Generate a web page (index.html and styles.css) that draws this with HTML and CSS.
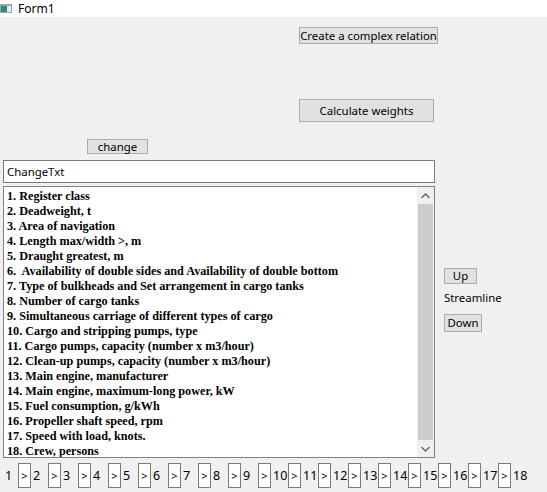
FILE: index.html
```html
<!DOCTYPE html>
<html>
<head>
<meta charset="utf-8">
<link rel="stylesheet" href="styles.css">
</head>
<body>
<div class="titlebar">
  <svg class="appicon" width="12" height="11" viewBox="0 0 12 11">
    <rect x="0" y="1" width="12" height="9" fill="#9aa7ae"/>
    <rect x="1" y="3" width="6" height="6" fill="#2e8c7a"/>
    <rect x="7" y="3" width="4" height="6" fill="#e6ecef"/>
  </svg>
  <span class="title">Form1</span>
</div>
<div class="client">
  <div class="row r1"><button class="btn b-complex">Create a complex relation</button></div>
  <div class="row r2"><button class="btn b-calc">Calculate weights</button></div>
  <div class="row r3"><button class="btn b-change">change</button></div>
  <div class="row r4"><div class="textbox">ChangeTxt</div></div>
  <div class="main">
    <div class="listbox">
      <div class="items">
        <div>1. Register class</div>
        <div>2. Deadweight, t</div>
        <div>3. Area of navigation</div>
        <div>4. Length max/width &gt;, m</div>
        <div>5. Draught greatest, m</div>
        <div>6.&nbsp; Availability of double sides and Availability of double bottom</div>
        <div>7. Type of bulkheads and Set arrangement in cargo tanks</div>
        <div>8. Number of cargo tanks</div>
        <div>9. Simultaneous carriage of different types of cargo</div>
        <div>10. Cargo and stripping pumps, type</div>
        <div>11. Cargo pumps, capacity (number x m3/hour)</div>
        <div>12. Clean-up pumps, capacity (number x m3/hour)</div>
        <div>13. Main engine, manufacturer</div>
        <div>14. Main engine, maximum-long power, kW</div>
        <div>15. Fuel consumption, g/kWh</div>
        <div>16. Propeller shaft speed, rpm</div>
        <div>17. Speed with load, knots.</div>
        <div>18. Crew, persons</div>
      </div>
      <div class="scrollbar">
        <div class="arrow"><svg width="9" height="6" viewBox="0 0 9 6"><path d="M0.5 5 L4.5 1 L8.5 5" fill="none" stroke="#606060" stroke-width="1.3"/></svg></div>
        <div class="thumb"></div>
        <div class="arrow"><svg width="9" height="6" viewBox="0 0 9 6"><path d="M0.5 1 L4.5 5 L8.5 1" fill="none" stroke="#606060" stroke-width="1.3"/></svg></div>
      </div>
    </div>
    <div class="side">
      <button class="btn b-up">Up</button>
      <div class="label">Streamline</div>
      <button class="btn b-down">Down</button>
    </div>
  </div>
  <div class="pager">
    <span class="num first">1</span>
    <span class="pbtn">&gt;</span><span class="num">2</span>
    <span class="pbtn">&gt;</span><span class="num">3</span>
    <span class="pbtn">&gt;</span><span class="num">4</span>
    <span class="pbtn">&gt;</span><span class="num">5</span>
    <span class="pbtn">&gt;</span><span class="num">6</span>
    <span class="pbtn">&gt;</span><span class="num">7</span>
    <span class="pbtn">&gt;</span><span class="num">8</span>
    <span class="pbtn">&gt;</span><span class="num">9</span>
    <span class="pbtn">&gt;</span><span class="num">10</span>
    <span class="pbtn">&gt;</span><span class="num">11</span>
    <span class="pbtn">&gt;</span><span class="num">12</span>
    <span class="pbtn">&gt;</span><span class="num">13</span>
    <span class="pbtn">&gt;</span><span class="num">14</span>
    <span class="pbtn">&gt;</span><span class="num">15</span>
    <span class="pbtn">&gt;</span><span class="num">16</span>
    <span class="pbtn">&gt;</span><span class="num">17</span>
    <span class="pbtn">&gt;</span><span class="num">18</span>
  </div>
</div>
</body>
</html>
```
FILE: styles.css
```css
* { box-sizing: border-box; }
html, body { margin: 0; padding: 0; }
body {
  width: 547px;
  height: 492px;
  overflow: hidden;
  font-family: "Segoe UI", "Noto Sans", "Open Sans", sans-serif;
  font-size: 11.4px;
  color: #000;
  background: #f0f0f0;
}
.titlebar {
  height: 17px;
  background: #fff;
  display: flex;
  align-items: center;
}
.appicon { margin-left: 0; margin-right: 6px; }
.title { font-size: 12px; line-height: 17px; }
.client { background: #f0f0f0; height: 475px; }
.row { display: flex; }
.btn {
  font-family: "Segoe UI", "Noto Sans", "Open Sans", sans-serif;
  font-size: 11.4px;
  color: #000;
  background: #e1e1e1;
  border: 1px solid #adadad;
  padding: 0;
  margin: 0;
  display: flex;
  align-items: center;
  justify-content: center;
  line-height: 1;
  white-space: nowrap;
}
.r1 { padding-top: 10px; padding-left: 299px; }
.b-complex { width: 139px; height: 17px; }
.r2 { padding-top: 55px; padding-left: 299px; }
.b-calc { width: 135px; height: 23px; }
.r3 { padding-top: 17px; padding-left: 87px; }
.b-change { width: 61px; height: 15px; }
.r4 { padding-top: 6px; padding-left: 3px; }
.textbox {
  width: 432px;
  height: 23px;
  background: #fff;
  border: 1px solid #7a7a7a;
  padding-left: 3px;
  display: flex;
  align-items: center;
}
.main { display: flex; padding-top: 3px; padding-left: 3px; }
.listbox {
  width: 432px;
  height: 272px;
  background: #fff;
  border: 1px solid #828282;
  display: flex;
  overflow: hidden;
}
.items {
  flex: 1;
  padding-top: 2px;
  padding-left: 3px;
  font-family: "Liberation Serif", "Times New Roman", serif;
  font-weight: bold;
  font-size: 12.2px;
  line-height: 15px;
  white-space: nowrap;
  overflow: hidden;
}
.scrollbar {
  width: 17px;
  background: #f0f0f0;
  display: flex;
  flex-direction: column;
}
.arrow {
  height: 17px;
  display: flex;
  align-items: center;
  justify-content: center;
}
.thumb {
  flex: 1;
  margin: 0 1px;
  background: #cdcdcd;
}
.side {
  display: flex;
  flex-direction: column;
  align-items: flex-start;
  padding-left: 9px;
  padding-top: 82px;
}
.b-up { width: 33px; height: 16px; }
.label { margin-top: 6px; height: 15px; line-height: 15px; }
.b-down { margin-top: 9px; width: 38px; height: 18px; }
.pager {
  display: flex;
  align-items: center;
  padding-top: 5px;
  height: 30px;
}
.num { display: inline-block; height: 25px; line-height: 25px; font-size: 12.5px; padding-left: 2px; }
.num.first { padding-left: 5px; width: 18px; }
.num:not(.first) { width: 17px; }
.pbtn {
  display: inline-flex;
  align-items: center;
  justify-content: center;
  width: 13px;
  height: 25px;
  background: #fff;
  border: 1px solid #7a7a7a;
  font-size: 11px;
}
```
